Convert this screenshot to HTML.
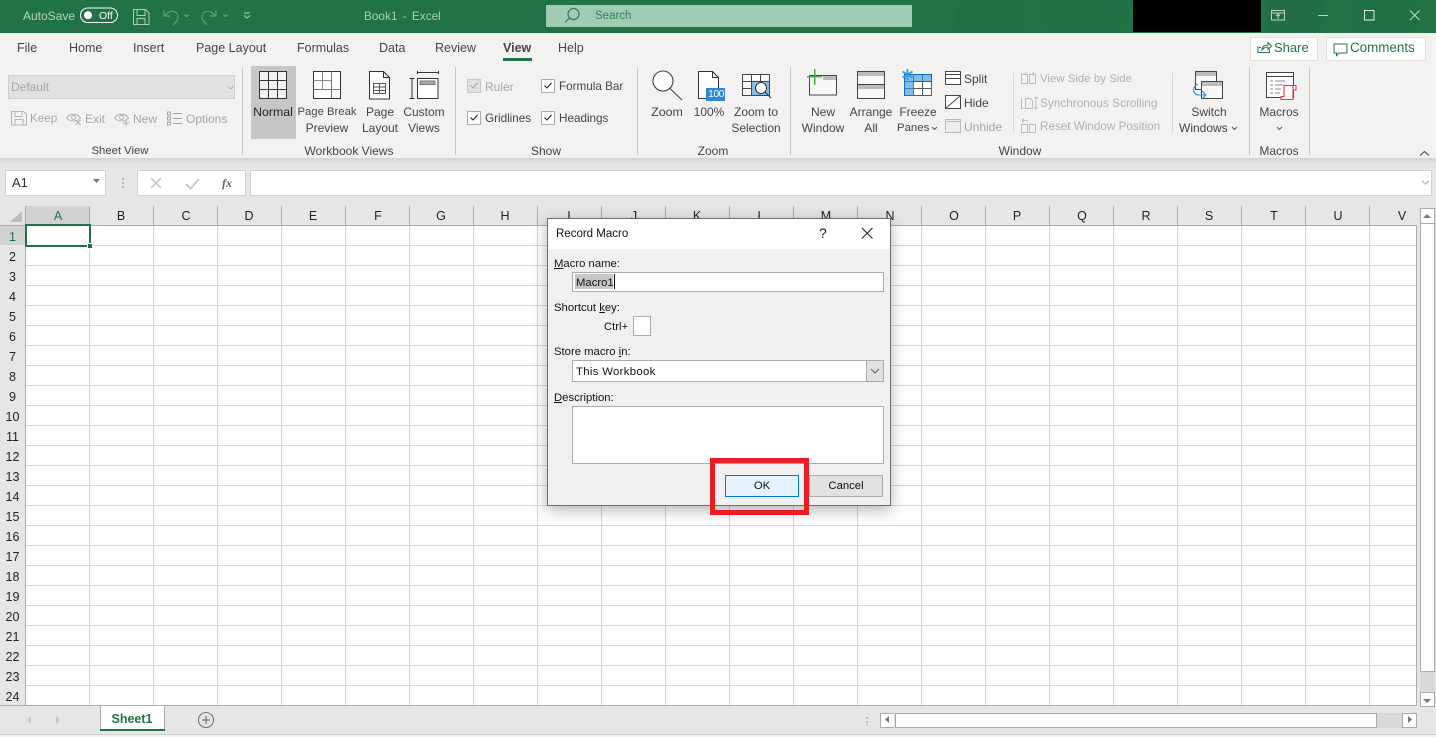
<!DOCTYPE html>
<html><head><meta charset="utf-8"><title>Book1 - Excel</title>
<style>
html,body{margin:0;padding:0}
body{width:1436px;height:736px;overflow:hidden;position:relative;background:#e6e6e6;font-family:"Liberation Sans",sans-serif;font-size:12px;color:#444}
.a{position:absolute}
.t{position:absolute;white-space:nowrap;line-height:16px;transform:translateY(-8px)}
.c{position:absolute;white-space:nowrap;line-height:16px;transform:translate(-50%,-8px)}
.d{color:#a6a6a6}
.n{font-size:11.7px}
.tab{font-size:12.5px;color:#444}
.cb{position:absolute;width:12px;height:12px;background:#fff;border:1px solid #ababab}
.ch{position:absolute;top:208px;width:20px;margin-left:-10px;text-align:center;font-size:12.5px;line-height:16px;color:#222}
.rh{position:absolute;left:0;width:25px;text-align:center;font-size:12.5px;line-height:20px;height:20px;color:#222;margin-top:1px}
.sep{position:absolute;width:1px;background:#c6c6c6}
.dl{position:absolute;font-size:11.3px;line-height:14px;color:#111;white-space:nowrap}
u{text-decoration:underline}
</style></head><body>
<!-- title bar -->
<div class="a" style="left:0;top:0;width:1436px;height:33px;background:#217346;overflow:hidden">
<div class="a" style="left:955px;top:-10px;width:70px;height:55px;border-radius:50%;background:#207045"></div>
<div class="a" style="left:1040px;top:-14px;width:90px;height:50px;border-radius:50%;background:#226f46"></div>
<div class="a" style="left:1265px;top:-10px;width:60px;height:50px;border-radius:50%;background:#226d45"></div>
<div class="a" style="left:1350px;top:-12px;width:70px;height:50px;border-radius:50%;background:#207045"></div>
<div class="a" style="left:1133px;top:0;width:128px;height:32px;background:#000"></div>
<div class="a" style="left:546px;top:5px;width:366px;height:22px;background:#a0ccb4"></div>
</div>
<div class="t" style="left:23px;top:16px;color:#b6d5c3;font-size:12px">AutoSave</div>
<div class="t" style="left:99px;top:16px;color:#fff;font-size:10.5px">Off</div>
<div class="t" style="left:364px;top:16px;color:#a9cfba;font-size:11.8px;word-spacing:2px">Book1 - Excel</div>
<div class="t" style="left:595px;top:16px;color:#2f7f58;font-size:11.5px">Search</div>

<!-- ribbon -->
<div class="a" style="left:0;top:33px;width:1436px;height:125px;background:#f3f2f1"></div>
<div class="a" style="left:0;top:158px;width:1436px;height:6px;background:linear-gradient(#d4d4d4,#e6e6e6)"></div>
<div class="t tab" style="left:17px;top:48px">File</div>
<div class="t tab" style="left:69px;top:48px">Home</div>
<div class="t tab" style="left:133px;top:48px">Insert</div>
<div class="t tab" style="left:196px;top:48px">Page Layout</div>
<div class="t tab" style="left:297px;top:48px">Formulas</div>
<div class="t tab" style="left:379px;top:48px">Data</div>
<div class="t tab" style="left:435px;top:48px">Review</div>
<div class="t tab" style="left:503px;top:48px;font-weight:bold;color:#444">View</div>
<div class="a" style="left:503px;top:58px;width:29px;height:3px;background:#217346"></div>
<div class="t tab" style="left:558px;top:48px">Help</div>

<div class="a" style="left:1250px;top:37px;width:66px;height:22px;background:#fff;border:1px solid #e1dfdd;border-radius:2px"></div>
<div class="t" style="left:1274px;top:48px;color:#217346;font-size:13px">Share</div>
<div class="a" style="left:1326px;top:37px;width:98px;height:22px;background:#fff;border:1px solid #e1dfdd;border-radius:2px"></div>
<div class="t" style="left:1350px;top:48px;color:#217346;font-size:13.4px">Comments</div>

<div class="a" style="left:8px;top:75px;width:225px;height:22px;background:#e1e1e1;border:1px solid #cfcfcf"></div>
<div class="t" style="left:11px;top:87px;color:#a6a6a6">Default</div>
<div class="t d n" style="left:30px;top:119px">Keep</div>
<div class="t d" style="left:85px;top:119px">Exit</div>
<div class="t d" style="left:133px;top:119px">New</div>
<div class="t d" style="left:186px;top:119px">Options</div>

<div class="a" style="left:251px;top:66px;width:45px;height:73px;background:#c6c6c4"></div>
<div class="c" style="left:273px;top:112px;color:#222;font-size:12.3px">Normal</div>
<div class="c" style="left:327px;top:112px;font-size:11.3px">Page Break</div>
<div class="c" style="left:327px;top:128px">Preview</div>
<div class="c" style="left:380px;top:112px">Page</div>
<div class="c" style="left:380px;top:128px">Layout</div>
<div class="c" style="left:424px;top:112px">Custom</div>
<div class="c" style="left:424px;top:128px">Views</div>

<div class="cb" style="left:467px;top:79px;background:#e1e1e1;border-color:#c6c6c6"></div>
<div class="cb" style="left:541px;top:79px"></div>
<div class="cb" style="left:467px;top:111px"></div>
<div class="cb" style="left:541px;top:111px"></div>
<div class="t d" style="left:485px;top:87px">Ruler</div>
<div class="t n" style="left:559px;top:87px">Formula Bar</div>
<div class="t n" style="left:485px;top:119px">Gridlines</div>
<div class="t n" style="left:559px;top:119px">Headings</div>

<div class="c" style="left:667px;top:112px;font-size:12.4px">Zoom</div>
<div class="c" style="left:709px;top:112px">100%</div>
<div class="c" style="left:756px;top:112px">Zoom to</div>
<div class="c" style="left:756px;top:128px">Selection</div>
<div class="c" style="left:823px;top:112px">New</div>
<div class="c" style="left:823px;top:128px">Window</div>
<div class="c" style="left:871px;top:112px">Arrange</div>
<div class="c" style="left:871px;top:128px">All</div>
<div class="c" style="left:918px;top:112px">Freeze</div>
<div class="t" style="left:897px;top:128px;font-size:11.4px">Panes</div>
<div class="t" style="left:964px;top:79px">Split</div>
<div class="t" style="left:964px;top:103px">Hide</div>
<div class="t d" style="left:964px;top:127px">Unhide</div>
<div class="t" style="left:1040px;top:79px;color:#b0b0b0;font-size:11.45px">View Side by Side</div>
<div class="t" style="left:1040px;top:103px;color:#b0b0b0;font-size:11.8px">Synchronous Scrolling</div>
<div class="t" style="left:1040px;top:127px;color:#b0b0b0;font-size:11.7px">Reset Window Position</div>
<div class="c" style="left:1209px;top:112px">Switch</div>
<div class="t" style="left:1179px;top:128px">Windows</div>
<div class="c" style="left:1279px;top:112px">Macros</div>

<div class="c" style="left:120px;top:151px;font-size:11.3px">Sheet View</div>
<div class="c" style="left:349px;top:151px">Workbook Views</div>
<div class="c" style="left:546px;top:151px">Show</div>
<div class="c" style="left:713px;top:151px">Zoom</div>
<div class="c" style="left:1020px;top:151px">Window</div>
<div class="c" style="left:1279px;top:151px">Macros</div>

<div class="sep" style="left:242px;top:67px;height:88px"></div>
<div class="sep" style="left:455px;top:67px;height:88px"></div>
<div class="sep" style="left:637px;top:67px;height:88px"></div>
<div class="sep" style="left:790px;top:67px;height:88px"></div>
<div class="sep" style="left:1249px;top:67px;height:88px"></div>
<div class="sep" style="left:1309px;top:67px;height:88px"></div>
<div class="sep" style="left:1013px;top:73px;height:59px;background:#d4d4d4"></div>
<div class="sep" style="left:1172px;top:73px;height:59px;background:#d4d4d4"></div>

<!-- formula bar -->
<div class="a" style="left:5px;top:170px;width:99px;height:24px;background:#fff;border:1px solid #d0d0d0"></div>
<div class="t" style="left:12px;top:183px;font-size:13px;color:#333">A1</div>
<div class="a" style="left:137px;top:170px;width:107px;height:24px;background:#fff;border:1px solid #d0d0d0"></div>
<div class="a" style="left:250px;top:170px;width:1180px;height:24px;background:#fff;border:1px solid #d0d0d0"></div>
<div class="t" style="left:222px;top:183px;font-family:'Liberation Serif',serif;font-style:italic;font-weight:bold;font-size:12px;color:#666">fx</div>

<!-- sheet -->
<div class="a" style="left:26px;top:226px;width:1390px;height:479px;background-color:#fff;background-image:linear-gradient(90deg,transparent 63px,#d4d4d4 63px),linear-gradient(180deg,transparent 19px,#d4d4d4 19px);background-size:64px 20px"></div>
<div class="a" style="left:26px;top:206px;width:63px;height:19px;background:#d2d2d2"></div>
<div class="a" style="left:0;top:226px;width:25px;height:19px;background:#d2d2d2"></div>
<div class="a" style="left:0;top:225px;width:1417px;height:1px;background:#ababab"></div>
<div class="a" style="left:25px;top:206px;width:1px;height:500px;background:#ababab"></div>
<div class="a" style="left:1416px;top:225px;width:1px;height:481px;background:#ababab"></div>
<div class="a" style="left:0;top:705px;width:1417px;height:1px;background:#ababab"></div>
<div class="a" style="left:25px;top:206px;width:1391px;height:19px;background-image:linear-gradient(90deg,transparent 64px,#ababab 64px);background-size:65px 19px;display:none"></div>
<svg class="a" style="left:0;top:206px" width="1416" height="19" shape-rendering="crispEdges"><path d="M89.500 0v19M153.500 0v19M217.500 0v19M281.500 0v19M345.500 0v19M409.500 0v19M473.500 0v19M537.500 0v19M601.500 0v19M665.500 0v19M729.500 0v19M793.500 0v19M857.500 0v19M921.500 0v19M985.500 0v19M1049.500 0v19M1113.500 0v19M1177.500 0v19M1241.500 0v19M1305.500 0v19M1369.500 0v19" stroke="#ababab"/></svg>
<div class="a" style="left:25px;top:224px;width:62px;height:19px;border:2px solid #217346"></div>
<div class="a" style="left:87px;top:243px;width:4px;height:4px;background:#217346;border:1px solid #fff"></div>

<div class="ch" style="left:58px;color:#217346">A</div><div class="ch" style="left:121px">B</div><div class="ch" style="left:186px">C</div><div class="ch" style="left:249px">D</div><div class="ch" style="left:313px">E</div><div class="ch" style="left:378px">F</div><div class="ch" style="left:441px">G</div><div class="ch" style="left:505px">H</div><div class="ch" style="left:569px">I</div><div class="ch" style="left:634px">J</div><div class="ch" style="left:697px">K</div><div class="ch" style="left:761px">L</div><div class="ch" style="left:826px">M</div><div class="ch" style="left:890px">N</div><div class="ch" style="left:954px">O</div><div class="ch" style="left:1017px">P</div><div class="ch" style="left:1082px">Q</div><div class="ch" style="left:1146px">R</div><div class="ch" style="left:1209px">S</div><div class="ch" style="left:1274px">T</div><div class="ch" style="left:1338px">U</div><div class="ch" style="left:1402px">V</div>

<div class="rh" style="top:226px;color:#217346">1</div><div class="rh" style="top:246px">2</div><div class="rh" style="top:266px">3</div><div class="rh" style="top:286px">4</div><div class="rh" style="top:306px">5</div><div class="rh" style="top:326px">6</div><div class="rh" style="top:346px">7</div><div class="rh" style="top:366px">8</div><div class="rh" style="top:386px">9</div><div class="rh" style="top:406px">10</div><div class="rh" style="top:426px">11</div><div class="rh" style="top:446px">12</div><div class="rh" style="top:466px">13</div><div class="rh" style="top:486px">14</div><div class="rh" style="top:506px">15</div><div class="rh" style="top:526px">16</div><div class="rh" style="top:546px">17</div><div class="rh" style="top:566px">18</div><div class="rh" style="top:586px">19</div><div class="rh" style="top:606px">20</div><div class="rh" style="top:626px">21</div><div class="rh" style="top:646px">22</div><div class="rh" style="top:666px">23</div><div class="rh" style="top:686px">24</div>

<!-- scrollbars -->
<div class="a" style="left:1420px;top:208px;width:15px;height:498px;background:#d9d9d9"></div>
<div class="a" style="left:1420px;top:208px;width:13px;height:14px;background:#fff;border:1px solid #ababab"></div>
<div class="a" style="left:1420px;top:223px;width:13px;height:447px;background:#fff;border:1px solid #ababab"></div>
<div class="a" style="left:1420px;top:692px;width:13px;height:13px;background:#fff;border:1px solid #ababab"></div>

<!-- sheet tabs -->
<div class="a" style="left:100px;top:706px;width:63px;height:23px;background:#fff;border-left:1px solid #ababab;border-right:1px solid #ababab"></div>
<div class="a" style="left:100px;top:729px;width:65px;height:2px;background:#217346"></div>
<div class="c" style="left:132px;top:719px;font-weight:bold;color:#217346;font-size:12.5px">Sheet1</div>
<div class="a" style="left:880px;top:713px;width:13px;height:13px;background:#fff;border:1px solid #ababab"></div>
<div class="a" style="left:894px;top:713px;width:508px;height:15px;background:#d9d9d9"></div>
<div class="a" style="left:895px;top:713px;width:480px;height:13px;background:#fff;border:1px solid #ababab"></div>
<div class="a" style="left:1402px;top:713px;width:13px;height:13px;background:#fff;border:1px solid #ababab"></div>
<div class="a" style="left:0;top:734px;width:1436px;height:2px;background:#f3f2f1;border-top:1px solid #d0d0d0"></div>

<!-- icons -->
<svg class="a" style="left:0;top:0" width="1436" height="736" viewBox="0 0 1436 736" fill="none" shape-rendering="crispEdges">
<!-- title -->
<g shape-rendering="auto">
<rect x="80.5" y="8" width="37" height="14.5" rx="7.2" stroke="#fff" stroke-width="1"/>
<circle cx="88" cy="15.2" r="4" fill="#fff"/>
<path d="M133.5 9.5h12l3.5 3.5v11.500h-15.500zM137 9.500v6h8v-6M137 24.500v-6h8v6" stroke="#a9cfba"/>
<path d="M164 10v6h6M164 16l5-4c4-2 9 0 9 5 0 3-2 5-5 8" stroke="#5f9e7d" stroke-width="1.200"/>
<path d="M216 10v6h-6M216 16l-5-4c-4-2-9 0-9 5 0 3 2 5 5 8" stroke="#5f9e7d" stroke-width="1.200"/>
<path d="M184.500 14.500l2 2 2-2M223.500 14.500l2 2 2-2" stroke="#77ad91"/>
<path d="M244 13h6M244 15.500l3 2.500 3-2.500" stroke="#b6d5c3"/>
<circle cx="573.500" cy="14" r="5.500" stroke="#2f7f58" stroke-width="1.200"/>
<path d="M569.500 18l-4.500 4.500" stroke="#2f7f58" stroke-width="1.200"/>
<path d="M1271.500 10.500h13v9.500h-13zM1271.500 13h13M1278 19v-4.500M1276 16l2-2 2 2" stroke="#bcd6c6"/>
<path d="M1318 15.500h10" stroke="#bcd6c6"/>
<path d="M1364.500 10.500h9.500v9.500h-9.500z" stroke="#e0ece5"/>
<path d="M1410 10.500l9.500 9.500M1419.500 10.500l-9.500 9.500" stroke="#bcd6c6" stroke-width="1.100"/>
<path d="M1258 46v6.500h11.500v-3M1259 47.500h2M1262 50c.5-4 3-5 6-5v-2.500l3.500 3.500-3.500 3.500V47c-3 0-4 1-6 3z" stroke="#217346"/>
<path d="M1334 44h13v9h-8l-2.500 2.500V53H1334z" stroke="#217346"/>
<path d="M233 86.500l-2.500 2.500-2.500-2.500" stroke="#b0b0b0"/>
</g>
<!-- sheet view row -->
<path d="M11.500 111.500h12l3 3v10.500h-15zM15 111.500v5h7v-5M15 124.500v-5h8v5" stroke="#b5b5b5"/>
<g shape-rendering="auto" stroke="#b0b0b0">
<path d="M66.500 118c3-5 11-5 14 0-3 4-11 4-14 0z"/><circle cx="73.500" cy="117.500" r="2"/><path d="M75.500 120l5 5M80.500 120l-5 5"/>
<path d="M114.500 118c3-5 11-5 14 0-3 4-11 4-14 0z"/><circle cx="121.500" cy="117.500" r="2"/><path d="M126 120v6M123 123h6"/>
</g>
<path d="M167.500 112h3v3h-3zM167.500 117h3v3h-3zM167.500 122h3v3h-3zM173 113.500h9M173 118.500h9M173 123.500h9" stroke="#a6a6a6"/>
<!-- normal -->
<path d="M259.500 71.500h27v27h-27zM268.500 71.500v27M277.500 71.500v27M259.500 80.500h27M259.500 89.500h27" stroke="#333" fill="#f3f2f1"/>
<path d="M313.500 71.500h27v27h-27z" stroke="#333" fill="#fff"/>
<path d="M313.500 80.500h18M322.500 71.500v18" stroke="#888"/>
<path d="M331.500 71.500v27M313.500 89.500h27" stroke="#2b88d8"/>
<path d="M369.500 71.500h14l6 6v21.500h-20zM383.500 71.500v6h6" stroke="#333" fill="#fff"/>
<path d="M373.500 83.500h12v10h-12zM373.500 87h12M373.500 90.500h12M379.500 83.500v10" stroke="#555"/>
<path d="M417.500 72.500h21M417.500 71v3M438.500 71v3M409.500 78.500h5M409.500 98.500h5M412 78.500v20" stroke="#333"/>
<path d="M417.500 78.500h20.500v20h-20.500z" stroke="#333" fill="#fff"/>
<rect x="420" y="81" width="15" height="3.500" fill="#aaa" stroke="#777"/>
<!-- checks -->
<g shape-rendering="auto" fill="none">
<path d="M470.500 85.500l2.500 2.500 4.500-5" stroke="#a6a6a6" stroke-width="1.100"/>
<path d="M544.500 85.500l2.500 2.500 4.500-5" stroke="#222" stroke-width="1.100"/>
<path d="M470.500 117.500l2.500 2.500 4.500-5" stroke="#222" stroke-width="1.100"/>
<path d="M544.500 117.500l2.500 2.500 4.500-5" stroke="#222" stroke-width="1.100"/>
<!-- zoom -->
<circle cx="663" cy="81" r="10" stroke="#444" stroke-width="1.100" fill="#fff"/>
<path d="M670 88.500l12 11.500" stroke="#444" stroke-width="1.100"/>
</g>
<path d="M698.500 71.500h14l6 6v21h-20zM712.500 71.500v6h6" stroke="#333" fill="#fff"/>
<rect x="706" y="88" width="19" height="13" fill="#2b88d8"/>
<!-- zoom selection -->
<path d="M742.500 74.500h27v21h-27zM742.500 81.500h27M742.500 88.500h27M751.500 74.500v21M760.500 74.500v21" stroke="#444" fill="#fff"/>
<rect x="752" y="82" width="17" height="13" fill="#83bdec"/>
<g shape-rendering="auto"><circle cx="761" cy="88" r="5.500" stroke="#333" fill="#fff"/><path d="M765 92l6 6" stroke="#333"/></g>
<!-- new window -->
<path d="M809.500 75.500h27v19.500h-27z" stroke="#444" fill="#f8f8f8"/>
<rect x="823" y="76" width="13" height="4" fill="#bbb"/>
<path d="M807 76.500h15M814.500 69v16" stroke="#4caf50" stroke-width="1.500"/>
<!-- arrange -->
<path d="M857.500 71.500h27v27h-27z" stroke="#444" fill="#f8f8f8"/>
<rect x="858" y="72" width="26" height="4" fill="#bbb"/>
<rect x="858" y="85" width="26" height="4" fill="#bbb"/>
<path d="M857.500 84.500h27" stroke="#444"/>
<!-- freeze -->
<path d="M904.500 74.500h27v21h-27z" stroke="#0f6cbd" fill="#fff"/>
<rect x="905" y="75" width="26" height="7" fill="#83bdec"/>
<rect x="905" y="82" width="9" height="13" fill="#83bdec"/>
<path d="M904.500 81.500h27M904.500 88.500h27M913.500 74.500v21M922.500 74.500v21" stroke="#3a7fb8"/>
<path d="M913.500 81.500h18M913.500 88.500h18M922.500 81.500v14" stroke="#555"/>
<g shape-rendering="auto" stroke="#2b9ae8" stroke-width="1.800"><path d="M907.500 69v11M902.500 71.500l10 6M912.500 71.500l-10 6"/></g>
<!-- split -->
<path d="M945.500 71.500h15v13h-15zM945.500 74.500h15M945.500 78.500h15" stroke="#444" fill="#fff"/>
<path d="M945.500 95.500h15v13h-15z" stroke="#444" fill="#fff"/>
<path d="M946 108l14-12" stroke="#444" shape-rendering="auto"/>
<path d="M945.500 119.500h15v13h-15zM945.500 121.500h15" stroke="#bbb" fill="#eee"/>
<!-- view side -->
<path d="M1021.500 74.500h6v9h-6zM1029.500 74.500h6v9h-6zM1024 74.500l2-2M1032 74.500l2-2" stroke="#bbb"/>
<path d="M1021.500 98.500v10h2M1025.500 98.500h5l2 2v8h-7zM1036 97v12M1034.500 98.500l1.500-1.500 1.500 1.500M1034.500 107.500l1.500 1.500 1.500-1.500" stroke="#bbb"/>
<path d="M1021.500 124.500h6v8h-6zM1029.500 124.500h6v8h-6zM1022 120.500h6M1022 120.500l2-2M1022 120.500l2 2" stroke="#bbb"/>
<!-- switch windows -->
<path d="M1195.500 71.500h21v18h-21z" stroke="#444" fill="#f8f8f8"/>
<rect x="1196" y="72" width="20" height="4" fill="#bbb"/>
<path d="M1201.500 81.500h21v17h-21z" stroke="#444" fill="#f8f8f8"/>
<rect x="1202" y="82" width="20" height="4" fill="#bbb"/>
<g shape-rendering="auto"><path d="M1198 84c-6 2-6 11 1 11h6M1202 91l4 4-4 4" stroke="#2b88d8" stroke-width="1.100"/></g>
<!-- macros -->
<path d="M1266.500 72.500h27v25h-27zM1266.500 76.500h27" stroke="#444" fill="#fff"/>
<path d="M1270 81h3M1275 81h10M1270 85h3M1275 85h8M1270 89h3M1275 89h6M1270 93h3M1275 93h5" stroke="#888"/>
<g shape-rendering="auto"><path d="M1284 85.500h12v4.500h-3v9.500h-12v-3h3zM1293 85.500v4.500" stroke="#e8383d" fill="#fff" stroke-width="1.100"/></g>
<!-- chevrons -->
<g shape-rendering="auto" stroke="#555">
<path d="M932 127l2.500 2.500 2.500-2.500M1232 127l2.500 2.500 2.500-2.500M1277 127l2.500 2.500 2.500-2.500"/>
<path d="M1420 155.500l4.500-4 4.500 4" stroke="#444" stroke-width="1.100"/>
<path d="M1422 181l3.500 3 3.500-3" stroke="#c0c0c0" stroke-width="1.500"/>
<path d="M151 178l10 10M161 178l-10 10" stroke="#c8c8c8" stroke-width="1.600"/>
<path d="M186 184l4.500 4.500 8.500-9.500" stroke="#c8c8c8" stroke-width="2"/>
</g>
<path d="M93 179h7l-3.500 4z" fill="#777" shape-rendering="auto"/>
<path d="M122 178h2v2h-2zM122 182h2v2h-2zM122 186h2v2h-2z" fill="#b5b5b5"/>
<path d="M10 222L22 211v11z" fill="#bdbdbd" shape-rendering="auto"/>
<!-- scroll arrows -->
<g shape-rendering="auto">
<path d="M1427 214l-4 4h8z" fill="#777"/><path d="M1423 699h8l-4 4z" fill="#777"/>
<path d="M889 716v7l-4-3.500z" fill="#777"/><path d="M1408 716v7l4-3.500z" fill="#777"/>
<path d="M31 716v8l-4-4zM56 716v8l4-4z" fill="#c8c8c8"/>
<circle cx="206" cy="720" r="7.500" stroke="#777" stroke-width="1.100"/>
<path d="M206 716v8M202 720h8" stroke="#777" stroke-width="1.200"/>
</g>
<path d="M866 717h2v2h-2zM866 721h2v2h-2zM866 725h2v-1h-2z" fill="#bbb"/>
</svg>
<div class="a" style="left:707px;top:88px;width:18px;text-align:center;color:#fff;font-size:10.5px;line-height:13px;letter-spacing:-.5px">100</div>

<!-- dialog -->
<div class="a" style="left:547px;top:218px;width:342px;height:286px;background:#f0f0f0;border:1px solid #6d6d6d;box-shadow:0 4px 14px rgba(0,0,0,.3)"></div>
<div class="a" style="left:548px;top:219px;width:342px;height:30px;background:#fff"></div>
<div class="dl" style="left:556px;top:227px;font-size:11.5px">Record Macro</div>
<div class="dl" style="left:819px;top:225px;font-size:14px;line-height:16px">?</div>
<svg class="a" style="left:861px;top:227px" width="14" height="14" fill="none"><path d="M1 1l10.500 10.500M11.500 1L1 11.500" stroke="#222" stroke-width="1.100"/></svg>
<div class="dl" style="left:554px;top:257px"><u>M</u>acro name:</div>
<div class="a" style="left:572px;top:272px;width:310px;height:18px;background:#fff;border:1px solid #ababab"></div>
<div class="a" style="left:575px;top:274px;width:38px;height:15px;background:#c8c8c8"></div>
<div class="a" style="left:614px;top:274px;width:1px;height:15px;background:#111"></div>
<div class="dl" style="left:576px;top:276px">Macro1</div>
<div class="dl" style="left:554px;top:301px">Shortcut <u>k</u>ey:</div>
<div class="dl" style="left:604px;top:320px">Ctrl+</div>
<div class="a" style="left:633px;top:316px;width:16px;height:18px;background:#fff;border:1px solid #ababab"></div>
<div class="dl" style="left:554px;top:345px">Store macro <u>i</u>n:</div>
<div class="a" style="left:572px;top:360px;width:310px;height:20px;background:#fff;border:1px solid #ababab"></div>
<div class="a" style="left:866px;top:361px;width:16px;height:20px;background:#e1e1e1;border-left:1px solid #ababab"></div>
<svg class="a" style="left:870px;top:368px" width="10" height="6" fill="none"><path d="M1 1l4 4 4-4" stroke="#666" stroke-width="1.100"/></svg>
<div class="dl" style="left:576px;top:365px;letter-spacing:.35px">This Workbook</div>
<div class="dl" style="left:554px;top:391px"><u>D</u>escription:</div>
<div class="a" style="left:572px;top:406px;width:310px;height:56px;background:#fff;border:1px solid #ababab"></div>
<div class="a" style="left:725px;top:475px;width:72px;height:20px;background:#e5f1fb;border:1px solid #0078d7"></div>
<div class="c" style="left:762px;top:486px;font-size:11.3px;color:#111">OK</div>
<div class="a" style="left:809px;top:475px;width:72px;height:20px;background:#e1e1e1;border:1px solid #adadad"></div>
<div class="c" style="left:846px;top:486px;font-size:11.3px;color:#111">Cancel</div>
<div class="a" style="left:710px;top:458px;width:89px;height:47px;border:5px solid #ed1c24"></div>
</body></html>
